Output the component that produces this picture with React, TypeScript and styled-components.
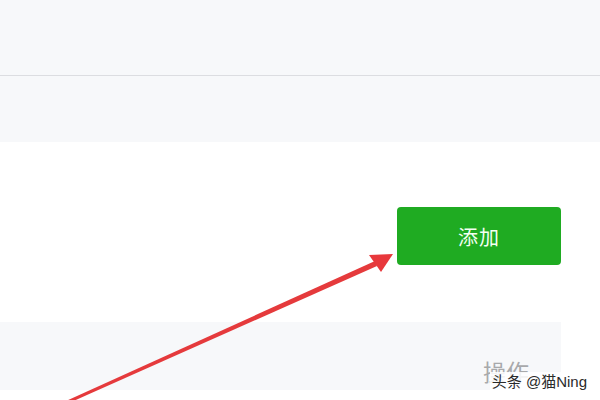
import React from "react";
import styled, { createGlobalStyle } from "styled-components";

const Global = createGlobalStyle`
  html, body { margin: 0; padding: 0; background: #ffffff; }
  body { width: 600px; height: 400px; overflow: hidden; font-family: "Noto Sans CJK SC", "Noto Sans", sans-serif; }
`;

const Page = styled.div`
  position: relative;
  width: 600px;
  height: 400px;
  overflow: hidden;
  display: flex;
  flex-direction: column;
`;

const TopBar = styled.div`
  height: 75px;
  background: #f7f8fa;
  border-bottom: 1px solid #dcdde1;
  flex-shrink: 0;
`;

const SubBar = styled.div`
  height: 66px;
  background: #f7f8fa;
  flex-shrink: 0;
`;

const ActionRow = styled.div`
  display: flex;
  justify-content: flex-end;
  padding: 65px 39px 0 0;
`;

const AddButton = styled.button`
  width: 164px;
  height: 58px;
  border: none;
  border-radius: 4px;
  background: #1fab22;
  color: #f4fff2;
  font-family: "Noto Sans CJK SC", sans-serif;
  font-size: 20px;
  letter-spacing: 1px;
  cursor: pointer;
`;

const TableHead = styled.div`
  margin-top: 57px;
  width: 561px;
  height: 68px;
  background: #f7f8fa;
  display: flex;
  justify-content: flex-end;
  box-sizing: border-box;
  padding: 34px 32px 0 0;
  flex-shrink: 0;
`;

const HeadCell = styled.span`
  font-size: 23px;
  color: #a8a9ab;
  line-height: 30px;
`;

const Watermark = styled.div`
  position: absolute;
  right: 11px;
  bottom: 8px;
  padding: 0 2px;
  background: rgba(255, 255, 255, 0.85);
  font-family: "Liberation Sans", "Noto Sans CJK SC", sans-serif;
  font-size: 15px;
  color: #2a2a2a;
  line-height: 20px;
`;

const ArrowLayer = styled.svg`
  position: absolute;
  left: 0;
  top: 0;
  pointer-events: none;
`;

export default function App() {
  return (
    <Page>
      <Global />
      <TopBar />
      <SubBar />
      <ActionRow>
        <AddButton>添加</AddButton>
      </ActionRow>
      <TableHead>
        <HeadCell>操作</HeadCell>
      </TableHead>
      <Watermark>头条 @猫Ning</Watermark>
      <ArrowLayer width="600" height="400" viewBox="0 0 600 400">
        <polygon points="66,401 375,261 377,266 69,403" fill="#e53a3c" />
        <polygon points="393,254 369,255 381,272" fill="#e8383c" />
      </ArrowLayer>
    </Page>
  );
}
